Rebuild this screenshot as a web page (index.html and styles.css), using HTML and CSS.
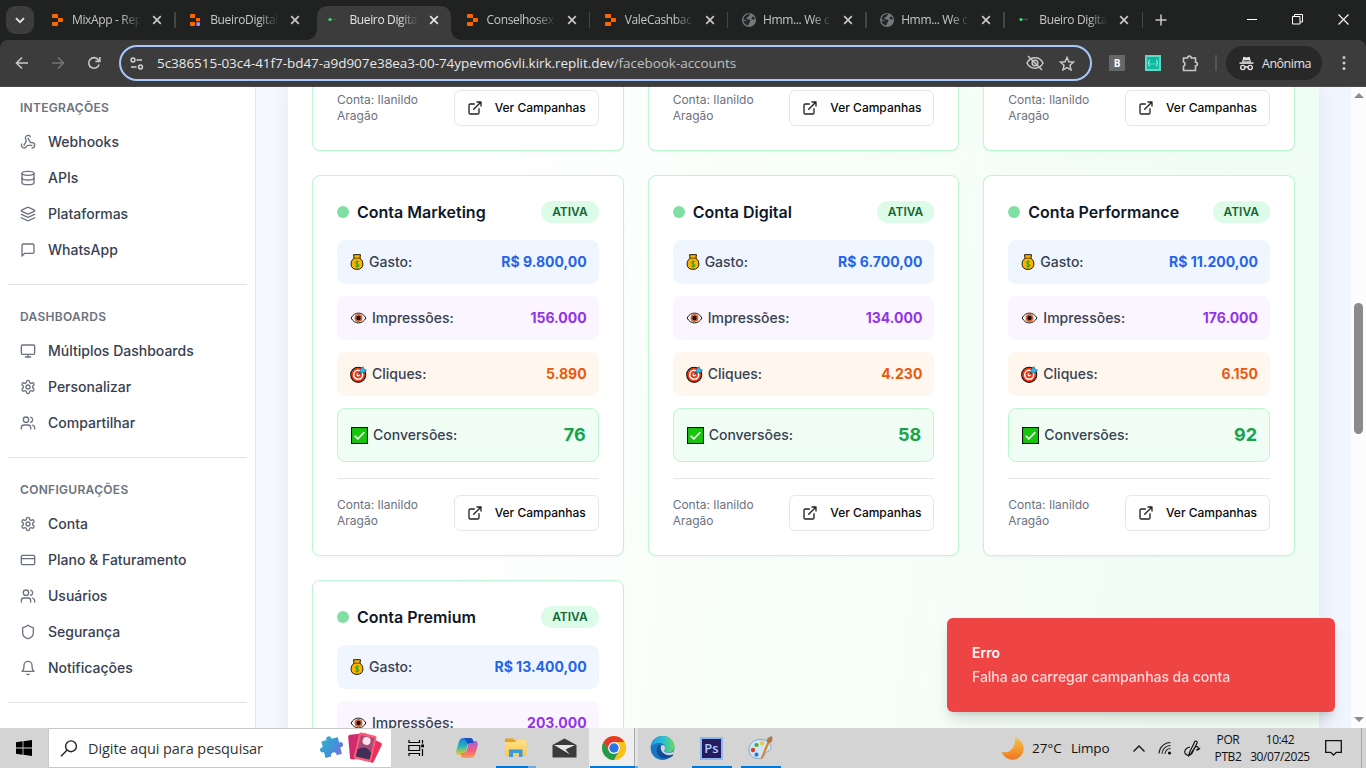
FILE: index.html
```html
<!DOCTYPE html>
<html lang="pt-BR">
<head>
<meta charset="utf-8">
<title>Bueiro Digital</title>
<link rel="stylesheet" href="styles.css">
</head>
<body>
<svg class="defs" width="0" height="0" aria-hidden="true">
  <defs>
    <linearGradient id="g-puz" x1="0" y1="0" x2="1" y2="1"><stop offset="0" stop-color="#35b6c8"/><stop offset=".55" stop-color="#3f94d6"/><stop offset="1" stop-color="#8a6ae0"/></linearGradient>
    <linearGradient id="g-moon" x1="0" y1="0" x2="0" y2="1"><stop offset="0" stop-color="#f6c544"/><stop offset="1" stop-color="#ef7420"/></linearGradient>
    <linearGradient id="g-edge" x1="0" y1="0" x2="1" y2="0"><stop offset="0" stop-color="#1d9fe3"/><stop offset=".55" stop-color="#2cc0cf"/><stop offset="1" stop-color="#67dc55"/></linearGradient>
    <linearGradient id="g-cop1" x1="0" y1="0" x2="0" y2="1"><stop offset="0" stop-color="#1b7be0"/><stop offset=".5" stop-color="#29b7b5"/><stop offset="1" stop-color="#f4cf1c"/></linearGradient>
    <linearGradient id="g-cop2" x1="0" y1="0" x2="0" y2="1"><stop offset="0" stop-color="#a75ce4"/><stop offset=".55" stop-color="#f0607d"/><stop offset="1" stop-color="#f9a050"/></linearGradient>
    <linearGradient id="g-fold" x1="0" y1="0" x2="0" y2="1"><stop offset="0" stop-color="#ffe08a"/><stop offset="1" stop-color="#fbc944"/></linearGradient>
  </defs>
  <symbol id="close" viewBox="0 0 10 10"><path d="M1.2 1.2l7.6 7.6M8.8 1.2l-7.6 7.6" fill="none" stroke="currentColor" stroke-width="1.7"/></symbol>
  <symbol id="replit" viewBox="0 0 12 12"><path fill="#ff6600" d="M1 0h4a1 1 0 0 1 1 1v3H1a1 1 0 0 1-1-1V1a1 1 0 0 1 1-1zM6 4h4a1 1 0 0 1 1 1v2a1 1 0 0 1-1 1H6zM1 8h5v3a1 1 0 0 1-1 1H1a1 1 0 0 1-1-1V9a1 1 0 0 1 1-1z"/></symbol>
  <symbol id="replit2" viewBox="0 0 12 12"><path fill="#ff6600" d="M1 0h4v4H1a1 1 0 0 1-1-1V1a1 1 0 0 1 1-1zM6 4h4v3.300H6zM1 8h4v4H1a1 1 0 0 1-1-1V9a1 1 0 0 1 1-1z"/><rect x="6.300" y="8.200" width="3.700" height="3.700" rx=".8" fill="#a78bfa"/></symbol>
  <symbol id="bueiro" viewBox="0 0 12 12"><circle cx="2" cy="5.500" r="1.600" fill="#37e47d"/><path d="M4 5.500h5" stroke="#26633f" stroke-width="1.200"/></symbol>
  <symbol id="globe" viewBox="0 0 14 14"><circle cx="7" cy="7" r="7" fill="#75797e"/><path fill="#242626" d="M8.200.8c-.2 1.700-1.300 1.500-1.700 2.600-.5 1.100-2.200.7-2 2 .2 1.200 1.700.8 3 1 1.400.3 1 1.900.2 2.700-.8.900-.5 2.700-1.800 3.300-2.400-.5-4.300-2.400-4.700-4.600 1.100-.1 2.600.7 3.700.5-.3-1-2.400-1.200-3.500-2.300C1.900 3.300 4.600.7 8.200.8zM13 6.300c-1.700.4-2.800.2-3.500-.6-.5-.7.3-1.500 1.600-2.300.9.7 1.600 1.800 1.900 2.900z"/></symbol>

  <symbol id="webhook" viewBox="0 0 24 24"><path d="M18 16.980h-5.990c-1.100 0-1.950.94-2.480 1.900A4 4 0 0 1 2 17c.01-.7.2-1.400.57-2"/><path d="m6 17 3.130-5.780c.53-.97.1-2.180-.5-3.100a4 4 0 1 1 6.890-4.060"/><path d="m12 6 3.130 5.730C15.660 12.700 16.900 13 18 13a4 4 0 0 1 0 8"/></symbol>
  <symbol id="database" viewBox="0 0 24 24"><ellipse cx="12" cy="5" rx="9" ry="3"/><path d="M3 5v14a9 3 0 0 0 18 0V5"/><path d="M3 12a9 3 0 0 0 18 0"/></symbol>
  <symbol id="layers" viewBox="0 0 24 24"><path d="m12.830 2.180a2 2 0 0 0-1.660 0L2.600 6.080a1 1 0 0 0 0 1.830l8.580 3.910a2 2 0 0 0 1.660 0l8.580-3.900a1 1 0 0 0 0-1.830Z"/><path d="m22 17.650-9.170 4.160a2 2 0 0 1-1.660 0L2 17.650"/><path d="m22 12.650-9.170 4.160a2 2 0 0 1-1.660 0L2 12.650"/></symbol>
  <symbol id="message" viewBox="0 0 24 24"><path d="M21 15a2 2 0 0 1-2 2H7l-4 4V5a2 2 0 0 1 2-2h14a2 2 0 0 1 2 2z"/></symbol>
  <symbol id="monitor" viewBox="0 0 24 24"><rect width="20" height="14" x="2" y="3" rx="2"/><path d="M8 21h8M12 17v4"/></symbol>
  <symbol id="settings" viewBox="0 0 24 24"><path d="M12.220 2h-.44a2 2 0 0 0-2 2v.18a2 2 0 0 1-1 1.730l-.43.25a2 2 0 0 1-2 0l-.15-.08a2 2 0 0 0-2.730.73l-.22.38a2 2 0 0 0 .73 2.730l.15.1a2 2 0 0 1 1 1.720v.51a2 2 0 0 1-1 1.740l-.15.09a2 2 0 0 0-.73 2.730l.22.38a2 2 0 0 0 2.730.73l.15-.08a2 2 0 0 1 2 0l.43.25a2 2 0 0 1 1 1.730V20a2 2 0 0 0 2 2h.44a2 2 0 0 0 2-2v-.18a2 2 0 0 1 1-1.730l.43-.25a2 2 0 0 1 2 0l.15.08a2 2 0 0 0 2.730-.73l.22-.39a2 2 0 0 0-.73-2.730l-.15-.08a2 2 0 0 1-1-1.740v-.5a2 2 0 0 1 1-1.740l.15-.09a2 2 0 0 0 .73-2.730l-.22-.38a2 2 0 0 0-2.730-.73l-.15.08a2 2 0 0 1-2 0l-.43-.25a2 2 0 0 1-1-1.730V4a2 2 0 0 0-2-2z"/><circle cx="12" cy="12" r="3"/></symbol>
  <symbol id="users" viewBox="0 0 24 24"><path d="M16 21v-2a4 4 0 0 0-4-4H6a4 4 0 0 0-4 4v2"/><circle cx="9" cy="7" r="4"/><path d="M22 21v-2a4 4 0 0 0-3-3.870M16 3.130a4 4 0 0 1 0 7.750"/></symbol>
  <symbol id="card" viewBox="0 0 24 24"><rect width="20" height="14" x="2" y="5" rx="2"/><path d="M2 10h20"/></symbol>
  <symbol id="shield" viewBox="0 0 24 24"><path d="M20 13c0 5-3.500 7.500-7.660 8.950a1 1 0 0 1-.67-.01C7.500 20.500 4 18 4 13V6a1 1 0 0 1 1-1c2 0 4.500-1.200 6.240-2.720a1.170 1.170 0 0 1 1.520 0C14.510 3.810 17 5 19 5a1 1 0 0 1 1 1z"/></symbol>
  <symbol id="bell" viewBox="0 0 24 24"><path d="M6 8a6 6 0 0 1 12 0c0 7 3 9 3 9H3s3-2 3-9"/><path d="M10.300 21a1.940 1.940 0 0 0 3.400 0"/></symbol>
  <symbol id="external" viewBox="0 0 24 24"><path d="M15 3h6v6M10 14 21 3M18 13v6a2 2 0 0 1-2 2H5a2 2 0 0 1-2-2V8a2 2 0 0 1 2-2h6"/></symbol>

  <symbol id="e-money" viewBox="0 0 13 16"><path d="M3 .7h7l-.6 3.500c1.900 1.300 3 3.400 3 6 0 3.300-2.200 5.200-5.900 5.200S.6 13.500.6 10.200c0-2.600 1.100-4.700 3-6z" fill="#fbb500" stroke="#231a05" stroke-width="1"/><path d="M3.300 4.200h6.400" stroke="#5b4305" stroke-width=".9"/><path d="M8.300 8.100c-.4-.6-1-.8-1.700-.8-1 0-1.700.5-1.700 1.300 0 1.900 3.500.8 3.500 2.800 0 .8-.8 1.300-1.800 1.300-.8 0-1.500-.3-1.900-.9M6.600 6.400v7.300" fill="none" stroke="#13a10e" stroke-width="1"/></symbol>
  <symbol id="e-eye" viewBox="0 0 16 12"><path d="M.6 6C2.300 2.800 5 1.100 8 1.100S13.700 2.800 15.400 6C13.700 9.200 11 10.900 8 10.900S2.300 9.200.6 6z" fill="#fff" stroke="#161616"/><circle cx="8" cy="6" r="4" fill="#d9602b"/><circle cx="8" cy="6" r="2.200" fill="#111"/></symbol>
  <symbol id="e-target" viewBox="0 0 16 16"><circle cx="7.700" cy="8.300" r="7.100" fill="#f03a17" stroke="#161616"/><circle cx="7.700" cy="8.300" r="4.200" fill="none" stroke="#fff" stroke-width="1.400"/><circle cx="7.700" cy="8.300" r="1.500" fill="#fff"/><path d="M7.600 8.400 12 4" stroke="#123d55" stroke-width="1"/><path d="M9.500 6.500V3.400L12.300.5l.8 2.300 2.500 1-2.800 2.700z" fill="#2db8f2" stroke="#134" stroke-width=".4"/></symbol>
  <symbol id="e-check" viewBox="0 0 16 16"><rect x=".5" y=".5" width="15" height="15" fill="#16c60c" stroke="#111" stroke-width="1"/><path d="m3.500 8.200 3 3 6-6.200" fill="none" stroke="#fff" stroke-width="1.500"/></symbol>
</svg>

<header class="tabstrip">
  <button class="tab-search"><svg width="10" height="7" viewBox="0 0 10 7"><path d="M1 1.200 5 5.200l4-4" fill="none" stroke="currentColor" stroke-width="1.900"/></svg></button>
  <div class="tabs">
    <div class="tab sep"><svg class="fav"><use href="#replit"/></svg><span class="tt">MixApp - Rep</span><svg class="x"><use href="#close"/></svg></div>
    <div class="tab"><svg class="fav"><use href="#replit2"/></svg><span class="tt">BueiroDigital</span><svg class="x"><use href="#close"/></svg></div>
    <div class="tab active"><svg class="fav"><use href="#bueiro"/></svg><span class="tt">Bueiro Digita</span><svg class="x"><use href="#close"/></svg></div>
    <div class="tab sep"><svg class="fav"><use href="#replit"/></svg><span class="tt">Conselhosex</span><svg class="x"><use href="#close"/></svg></div>
    <div class="tab sep"><svg class="fav"><use href="#replit"/></svg><span class="tt">ValeCashbac</span><svg class="x"><use href="#close"/></svg></div>
    <div class="tab sep"><svg class="fav globe"><use href="#globe"/></svg><span class="tt">Hmm... We c</span><svg class="x"><use href="#close"/></svg></div>
    <div class="tab sep"><svg class="fav globe"><use href="#globe"/></svg><span class="tt">Hmm... We c</span><svg class="x"><use href="#close"/></svg></div>
    <div class="tab sep"><svg class="fav"><use href="#bueiro"/></svg><span class="tt">Bueiro Digita</span><svg class="x"><use href="#close"/></svg></div>
  </div>
  <svg class="newtab" width="12" height="12" viewBox="0 0 12 12"><path d="M6 .5v11M.5 6h11" stroke="#c7c7c7" stroke-width="1.500"/></svg>
  <div class="winbtns">
    <svg width="10" height="11" viewBox="0 0 10 11"><path d="M0 5.500h10" stroke="#fff"/></svg>
    <svg width="11" height="11" viewBox="0 0 11 11"><path d="M.5 2.500h7.500v7.500H.5zM2.500 2.500V.5h8v7.500H8" fill="none" stroke="#fff"/></svg>
    <svg width="11" height="11" viewBox="0 0 11 11"><path d="M.5.5l10 10M10.500.5l-10 10" stroke="#fff" stroke-width="1.100"/></svg>
  </div>
</header>

<div class="toolbar">
  <nav class="navbtns">
    <svg width="14" height="14" viewBox="0 0 14 14"><path d="M13 7H2M7 1.500 1.500 7 7 12.500" fill="none" stroke="#c7c7c7" stroke-width="1.600"/></svg>
    <svg width="14" height="14" viewBox="0 0 14 14"><path d="M1 7h11M7 1.500 12.500 7 7 12.500" fill="none" stroke="#757575" stroke-width="1.600"/></svg>
    <svg width="14" height="14" viewBox="0 0 14 14"><path d="M12.100 8.500A5.300 5.300 0 1 1 11.300 3.800L12.600 5.200M12.800 1v4.400H8.400" fill="none" stroke="#c7c7c7" stroke-width="1.600"/></svg>
  </nav>
  <div class="omnibox">
    <svg width="14" height="13" viewBox="0 0 14 13"><g fill="none" stroke="#d2d2d2" stroke-width="1.500"><circle cx="3" cy="3" r="1.900"/><path d="M6.500 3H12M1 10h5.500"/><circle cx="10.500" cy="10" r="1.900"/></g></svg>
    <span class="url">5c386515-03c4-41f7-bd47-a9d907e38ea3-00-74ypevmo6vli.kirk.replit.dev<i>/facebook-accounts</i></span>
    <svg class="eye" width="18" height="16" viewBox="0 0 18 16"><g fill="none" stroke="#c7c7c7" stroke-width="1.500"><path d="M1 8c1.600-3.400 4.500-5.200 8-5.200s6.400 1.800 8 5.200c-1.600 3.400-4.500 5.200-8 5.200S2.600 11.400 1 8z"/><circle cx="9" cy="8" r="2.800"/><path d="m2 1 14 14"/></g></svg>
    <svg class="star" width="16" height="15" viewBox="0 0 16 15"><path d="m8 1.500 1.900 4.300 4.600.4-3.500 3.100 1 4.600L8 11.500l-4 2.400 1-4.600-3.500-3.100 4.600-.4z" fill="none" stroke="#c7c7c7" stroke-width="1.500"/></svg>
  </div>
  <div class="exts">
    <b class="ext-b">B</b>
    <svg width="16" height="16" viewBox="0 0 16 16"><rect width="16" height="16" fill="#5ed7c5"/><rect x="2" y="2" width="12" height="12" fill="#10b8a3"/><path d="M5 5q-1.500 0-1 1.600T3 8q1.500 0 1 1.500T5 11M11 5q1.500 0 1 1.600T13 8q-1.500 0-1 1.500T11 11M5.700 9h1M7.500 9h1M9.300 9h1" fill="none" stroke="#b6fff0" stroke-width=".9"/></svg>
    <svg width="17" height="17" viewBox="0 0 17 17"><path d="M1.500 3h4a1.900 1.900 0 0 1 3.800 0h4.200v4.200a1.900 1.900 0 0 1 0 3.800v4.500h-12v-4.200a2.300 2.300 0 0 0 0-4.300z" fill="none" stroke="#c7c7c7" stroke-width="1.600"/></svg>
  </div>
  <div class="anon"><svg width="15" height="15" viewBox="0 0 15 15"><path d="M3 6.500 4.300.8l3.200.8 3.200-.8L12 6.500z" fill="#e3e3e3"/><path d="M4.500 4.800h6" stroke="#282828" stroke-width="1.100"/><path d="M.5 7.100h14" stroke="#e3e3e3" stroke-width="1.500"/><g fill="none" stroke="#e3e3e3" stroke-width="1.400"><circle cx="3.800" cy="11.500" r="2.100"/><circle cx="11.200" cy="11.500" r="2.100"/><path d="M6 11.300q1.500-1 3 0"/></g></svg>Anônima</div>
  <svg class="dots" width="4" height="16" viewBox="0 0 4 16"><g fill="#c7c7c7"><circle cx="2" cy="2.500" r="1.500"/><circle cx="2" cy="8" r="1.500"/><circle cx="2" cy="13.500" r="1.500"/></g></svg>
</div>

<div class="page">
  <aside class="sidebar">
    <section><h2>INTEGRAÇÕES</h2>
      <a><svg><use href="#webhook"/></svg>Webhooks</a>
      <a><svg><use href="#database"/></svg>APIs</a>
      <a><svg><use href="#layers"/></svg>Plataformas</a>
      <a><svg><use href="#message"/></svg>WhatsApp</a></section>
    <section><h2>DASHBOARDS</h2>
      <a><svg><use href="#monitor"/></svg>Múltiplos Dashboards</a>
      <a><svg><use href="#settings"/></svg>Personalizar</a>
      <a><svg><use href="#users"/></svg>Compartilhar</a></section>
    <section><h2>CONFIGURAÇÕES</h2>
      <a><svg><use href="#settings"/></svg>Conta</a>
      <a><svg><use href="#card"/></svg>Plano &amp; Faturamento</a>
      <a><svg><use href="#users"/></svg>Usuários</a>
      <a><svg><use href="#shield"/></svg>Segurança</a>
      <a><svg><use href="#bell"/></svg>Notificações</a></section>
  </aside>
  <main class="main">
    <div class="panel">
      <article class="acc tail"><footer><p>Conta: Ilanildo Aragão</p><button><svg><use href="#external"/></svg>Ver Campanhas</button></footer></article>
      <article class="acc tail"><footer><p>Conta: Ilanildo Aragão</p><button><svg><use href="#external"/></svg>Ver Campanhas</button></footer></article>
      <article class="acc tail"><footer><p>Conta: Ilanildo Aragão</p><button><svg><use href="#external"/></svg>Ver Campanhas</button></footer></article>

      <article class="acc">
        <header><h3>Conta Marketing</h3><span class="badge">ATIVA</span></header>
        <div class="row blue"><span><svg class="m"><use href="#e-money"/></svg>Gasto:</span><b>R$ 9.800,00</b></div>
        <div class="row purple"><span><svg class="e"><use href="#e-eye"/></svg>Impressões:</span><b>156.000</b></div>
        <div class="row orange"><span><svg class="t"><use href="#e-target"/></svg>Cliques:</span><b>5.890</b></div>
        <div class="row green"><span><svg class="t"><use href="#e-check"/></svg>Conversões:</span><b>76</b></div>
        <footer><p>Conta: Ilanildo Aragão</p><button><svg><use href="#external"/></svg>Ver Campanhas</button></footer>
      </article>
      <article class="acc">
        <header><h3>Conta Digital</h3><span class="badge">ATIVA</span></header>
        <div class="row blue"><span><svg class="m"><use href="#e-money"/></svg>Gasto:</span><b>R$ 6.700,00</b></div>
        <div class="row purple"><span><svg class="e"><use href="#e-eye"/></svg>Impressões:</span><b>134.000</b></div>
        <div class="row orange"><span><svg class="t"><use href="#e-target"/></svg>Cliques:</span><b>4.230</b></div>
        <div class="row green"><span><svg class="t"><use href="#e-check"/></svg>Conversões:</span><b>58</b></div>
        <footer><p>Conta: Ilanildo Aragão</p><button><svg><use href="#external"/></svg>Ver Campanhas</button></footer>
      </article>
      <article class="acc">
        <header><h3>Conta Performance</h3><span class="badge">ATIVA</span></header>
        <div class="row blue"><span><svg class="m"><use href="#e-money"/></svg>Gasto:</span><b>R$ 11.200,00</b></div>
        <div class="row purple"><span><svg class="e"><use href="#e-eye"/></svg>Impressões:</span><b>176.000</b></div>
        <div class="row orange"><span><svg class="t"><use href="#e-target"/></svg>Cliques:</span><b>6.150</b></div>
        <div class="row green"><span><svg class="t"><use href="#e-check"/></svg>Conversões:</span><b>92</b></div>
        <footer><p>Conta: Ilanildo Aragão</p><button><svg><use href="#external"/></svg>Ver Campanhas</button></footer>
      </article>
      <article class="acc">
        <header><h3>Conta Premium</h3><span class="badge">ATIVA</span></header>
        <div class="row blue"><span><svg class="m"><use href="#e-money"/></svg>Gasto:</span><b>R$ 13.400,00</b></div>
        <div class="row purple"><span><svg class="e"><use href="#e-eye"/></svg>Impressões:</span><b>203.000</b></div>
      </article>
    </div>
  </main>
  <div class="scrollbar"><i class="up"></i><i class="thumb"></i><i class="down"></i></div>
  <div class="toast"><strong>Erro</strong><span>Falha ao carregar campanhas da conta</span></div>
</div>

<footer class="taskbar">
  <div class="start"><svg width="16" height="16" viewBox="0 0 16 16"><path d="M0 2.200 6.600 1.300v6.300H0zM7.400 1.200 16 0v7.600H7.400zM0 8.400h6.600v6.300L0 13.800zM7.400 8.400H16V16l-8.600-1.200z" fill="#000"/></svg></div>
  <div class="search">
    <svg width="18" height="17" viewBox="0 0 18 17"><circle cx="11" cy="6.300" r="5.400" fill="none" stroke="#222" stroke-width="1.400"/><path d="M7.200 10.100 1 16.200" stroke="#222" stroke-width="1.400"/></svg>
    <span>Digite aqui para pesquisar</span>
    <svg class="promo" width="65" height="34" viewBox="0 0 65 34"><path transform="rotate(-14 13 16)" d="M4 8h5.500c-1.500-4 5.500-5 5 0H21v5.500c4-1.500 5 5.500 0 5V25h-5.500c1.500-4.500-6-5-5.500 0H4v-6c-4.500 1-4.500-6 0-5z" fill="url(#g-puz)"/><rect x="30" y="3" width="19" height="25" rx="2" transform="rotate(-5 39 15)" fill="#ce2c6c"/><rect x="45" y="8" width="15" height="22" rx="2" transform="rotate(26 52 18)" fill="#ec3059"/><g transform="rotate(13 47 17)"><rect x="37" y="3" width="18" height="27" rx="2" fill="#ff5b79"/><rect x="39" y="5.500" width="14" height="22" fill="#a64c78"/><circle cx="46" cy="10" r="4" fill="#ffe3e8"/><path d="M39 27.500v-7q7-7 14 0v7z" fill="#432e58"/></g></svg>
  </div>
  <div class="tview"><svg width="17" height="16" viewBox="0 0 17 16"><path d="M1 0v2.500h10.500V0M1 16v-2.500h10.500V16M.8 5.500h10.900v5H.8zM14.500 0v3.500M14.500 9v7" fill="none" stroke="#000" stroke-width="1.200"/><rect x="13.200" y="4.500" width="2.800" height="2.800"/></svg></div>
  <div class="apps">
    <div><svg width="24" height="24" viewBox="0 0 24 24"><path d="M9 2h6c2 0 2.500 1 3 2.500l.7 2.500h-3c-2 0-3 1-3.500 3l-1.500 6c-.6 2-1.500 3-3.500 3H4C1.500 19 .7 17 1.400 14L4 5.500C4.800 3 6.500 2 9 2z" fill="url(#g-cop1)"/><path d="M15 22H9c-2 0-2.500-1-3-2.500L5.300 17h3c2 0 3-1 3.500-3l1.500-6c.6-2 1.500-3 3.500-3H20c2.500 0 3.300 2 2.600 5L20 18.500c-.8 2.500-2.500 3.500-5 3.500z" fill="url(#g-cop2)"/><path d="M9 2h6c2 0 2.500 1 3 2.500l.7 2.500h-3c-1.200 0-2 .4-2.600 1.200z" fill="#1752c2"/></svg></div>
    <div class="run wide"><svg width="24" height="22" viewBox="0 0 24 22"><path d="M1 1.500h8l2 2h10.500V19H1z" fill="#e5a61b"/><path d="M1 5h10l2-2h9.500v16H1z" fill="url(#g-fold)"/><path d="M5 20v-7.500h13.500V20H15v-4H9v4z" fill="#3b9ad8"/></svg></div>
    <div><svg width="25" height="20" viewBox="0 0 25 20"><path d="M.5 7 12.500.5l12 6.500v12.500H.5z" fill="#3a3a3a"/><path d="M2 7h21l-9.500 4.500L18 16.500 10.500 12z" fill="#e6e6e6"/></svg></div>
    <div class="run cur"><svg width="24" height="24" viewBox="0 0 24 24"><circle cx="12" cy="12" r="12" fill="#fbc116"/><path d="M12 6h10.390A12 12 0 0 0 1.610 6L6.800 15z" fill="#e33b2e"/><path d="M1.610 6A12 12 0 0 0 12 24l5.200-9L12 12 6.800 15z" fill="#229a4c"/><path d="M22.390 6A12 12 0 0 1 12 24l5.200-9A6 6 0 0 0 17 8.500L12 6z" fill="#fbc116"/><circle cx="12" cy="12" r="5.900" fill="#fff"/><circle cx="12" cy="12" r="4.700" fill="#2b73e8"/></svg></div>
    <div><svg width="25" height="24" viewBox="0 0 25 24"><circle cx="12.500" cy="12" r="11.900" fill="#1976c4"/><path d="M.8 10.500C2 4 7 0 12.700 0 19.500 0 24.500 5 24.500 10.500c0 4-3 6-6.300 6-2.200 0-4.200-.7-4.200-1.700 0-.7 1.200-1.200 1.200-3.300 0-2.500-2.500-4.500-6-4.500-4 0-7 2-8.400 3.500z" fill="url(#g-edge)"/><path d="M9 9c-3 3-3 7.500 0 11 3 3.300 8 3.500 13 .5 1-.7 1.500-1.500.7-2.100C18 20.500 14 18.500 12.500 15.500c-.8-2-.3-3.500.8-5z" fill="#124e96"/><path d="M24.300 15c-3.500 2.500-8 2.200-10.200.5-.5-.8.900-1.500 1-3.500 0-1.500-1-3-2.500-2.900-2.500.2-2.700 4.600.3 7.600 3 2.800 7 3 9.800 1.600z" fill="#d4d4d4"/></svg></div>
    <div class="run mid"><span class="ps">Ps</span></div>
    <div class="run mid"><svg width="25" height="24" viewBox="0 0 25 24"><path d="M1 15C0 8.500 5.500 3.500 12 3.500s11 3 11 8c0 4-3.500 3.500-5 5S17 22 10.500 22.500C5.500 23 1.700 19.500 1 15z" fill="#cfe6f4" stroke="#7fa9c6"/><circle cx="5" cy="14" r="2.200" fill="#d8402e"/><circle cx="8.500" cy="9" r="2.100" fill="#47a83f"/><circle cx="14" cy="7.300" r="2.100" fill="#f2c632"/><circle cx="8.500" cy="18.700" r="2.100" fill="#3474cc"/><path d="m12.500 22.500 7-17 2.300.8-7.300 16.500z" fill="#e2832b"/><path d="M18.800 5.500c-.3-3 1.700-4.500 5.200-5.300 1 3.500 0 6.500-2.500 6.800z" fill="#a97a48"/></svg></div>
  </div>
  <div class="tray">
    <svg class="moon" width="23" height="23" viewBox="0 0 23 23"><path d="M14 .5A11.300 11.300 0 1 1 .5 14.500C8 18 15.500 10 14 .5z" fill="url(#g-moon)"/></svg>
    <span class="deg">27°C</span><span class="sky">Limpo</span>
    <svg class="chev" width="12" height="7" viewBox="0 0 12 7"><path d="M.5 6.500 6 1l5.500 5.500" fill="none" stroke="#111" stroke-width="1.400"/></svg>
    <svg class="wifi" width="14" height="14" viewBox="0 0 14 14"><g fill="none" stroke="#222" stroke-width="1.100"><path d="M1 12.500A11.500 11.500 0 0 1 12.500 1.500M4 12.800a8.500 8.500 0 0 1 8.500-8.300M7 13a5.500 5.500 0 0 1 5.500-5.500"/></g><circle cx="11.500" cy="12" r="1.500"/></svg>
    <svg class="pen" width="17" height="17" viewBox="0 0 17 17"><path d="M5.500 12.500 10.700 1.700c.7-1.200 3-.2 2.400 1.200L7.800 13.500l-3 2.200zM6 7C2.500 7.500 0 10 1 13c1 2.500 4 3 6 .5 2.500-3.500 3-6.500 5.500-7 2.500-.3 2 3-.2 3.500 2 .3 3-.5 3.700-2" fill="none" stroke="#111" stroke-width="1.200"/></svg>
    <div class="two lang"><span>POR</span><span>PTB2</span></div>
    <div class="two clock"><span>10:42</span><span>30/07/2025</span></div>
    <svg class="note" width="17" height="16" viewBox="0 0 17 16"><path d="M.7.700h15.600v11.600h-5L8.500 15l-2.800-2.700h-5z" fill="none" stroke="#111" stroke-width="1.300"/></svg>
    <i class="peek"></i>
  </div>
</footer>
</body>
</html>
```
FILE: styles.css
```css
* { box-sizing: border-box; }
body { margin: 0; width: 1366px; height: 768px; overflow: hidden; display: flex; flex-direction: column; font-family: Inter, sans-serif; background: #202222; }
.defs { position: absolute; }
svg { flex: none; display: block; }
h2, h3, p { margin: 0; }
button { font: inherit; padding: 0; }

.tabstrip { height: 40px; flex: none; display: flex; background: #202222; color: #c7c7c7; font: 12px "Open Sans", sans-serif; }
.tab-search { width: 28px; height: 28px; margin: 6px 3.500px 0 6px; border: 0; border-radius: 9px; background: #3c3c3c; color: #e3e3e3; display: grid; place-items: center; }
.tabs { display: flex; }
.tab { width: 138.200px; height: 40px; display: flex; align-items: center; padding-left: 14.500px; position: relative; }
.tab .fav { width: 12px; height: 12px; margin-right: 8px; }
.tab .fav.globe { width: 14px; height: 14px; margin: 0 7px 0 -1px; }
.tab .tt { width: 72px; flex: none; white-space: nowrap; letter-spacing: -.35px; margin-right: 8px; height: 20px; line-height: 20px; -webkit-mask-image: linear-gradient(90deg, #000 68%, transparent 96%); mask-image: linear-gradient(90deg, #000 68%, transparent 96%); }
.tab .x { width: 10px; height: 10px; }
.tab.active .tt { margin-left: 1px; margin-right: 8px; }
.tab.sep::after { content: ""; position: absolute; right: 0; top: 12px; width: 1.500px; height: 16px; background: #444746; }
.tab.active { color: #e3e3e3; z-index: 0; }
.tab.active::before { content: ""; position: absolute; z-index: -1; left: 3px; right: 1px; top: 6px; bottom: 0; background: #3c3c3c; border-radius: 10px 10px 0 0; }
.tab.active::after { content: ""; position: absolute; z-index: -1; left: -7px; right: -9px; bottom: 0; height: 10px; background: radial-gradient(circle at 0 0, transparent 9.500px, #3c3c3c 10px) left/10px 10px no-repeat, radial-gradient(circle at 100% 0, transparent 9.500px, #3c3c3c 10px) right/10px 10px no-repeat; }
.newtab { margin: 14px 0 0 12px; }
.winbtns { margin-left: auto; display: flex; }
.winbtns svg { margin: 14px 17.500px 0; }

.toolbar { height: 47px; flex: none; display: flex; align-items: center; background: #3c3c3c; border-radius: 8px 8px 0 0; border-bottom: 1px solid #4a4a4a; font-family: "Open Sans", sans-serif; }
.navbtns { display: flex; gap: 22px; padding: 0 18px 0 15px; }
.omnibox { width: 973px; height: 36px; border: 2px solid #a8c7fa; border-radius: 18px; display: flex; align-items: center; padding: 0 15px 0 9px; }
.url { font-size: 13.500px; letter-spacing: -.045px; color: #e8e8e8; margin-left: 13px; white-space: nowrap; }
.url i { font-style: normal; color: #c0c0c0; }
.omnibox .eye { margin-left: auto; }
.omnibox .star { margin-left: 15px; }
.exts { display: flex; align-items: center; gap: 20px; margin-left: 17px; padding-right: 17px; }
.exts svg:last-child { margin-left: 1px; margin-right: -1px; }
.ext-b { width: 16px; height: 16px; background: #676767; color: #fff; border-radius: 1px; font: bold 10px/16px "Open Sans", sans-serif; text-align: center; }
.exts + .anon::before { content: ""; position: absolute; left: -11px; top: 9px; height: 16px; width: 2px; background: #555; }
.anon { position: relative; margin-left: 11px; width: 96px; height: 34px; border-radius: 17px; background: #282828; color: #e3e3e3; font-size: 12.500px; letter-spacing: -.6px; letter-spacing: -.5px; display: flex; align-items: center; padding-left: 13px; gap: 8px; }
.dots { margin-left: 20px; }

.page { flex: 1; min-height: 0; display: flex; position: relative; background: #fff; overflow: hidden; }
.sidebar { width: 256px; flex: none; background: #fff; border-right: 1px solid #e5e7eb; padding: 0 8px; }
.sidebar section { border-bottom: 1px solid #e1e2e5; padding: 24px 0 16px; }
.sidebar section:first-child { padding-top: 13px; }
.sidebar h2 { font-size: 12px; line-height: 16px; font-weight: 600; letter-spacing: .3px; color: #6b7280; padding: 0 12px; margin-bottom: 8px; }
.sidebar a { display: flex; align-items: center; height: 36px; padding: 0 12px; gap: 12px; font-size: 14px; line-height: 20px; font-weight: 500; color: #374151; }
.sidebar svg { width: 16px; height: 16px; fill: none; stroke: #6b7280; stroke-width: 2; stroke-linecap: round; stroke-linejoin: round; }

.main { flex: 1; min-width: 0; padding: 0 32px; background: linear-gradient(90deg, #f5f8fc, #f0f5fe); overflow: hidden; }
.panel { height: 1100px; padding: 0 24px; display: grid; grid-template-columns: repeat(3, 1fr); gap: 24px; align-content: start; background: linear-gradient(97deg, #fff 14%, #f0fdf4 82%); box-shadow: 0 0 18px rgba(15, 23, 42, .07); }
.acc { background: #fff; border: 1px solid #bbf7d0; border-radius: 8px; padding: 24px; display: flex; flex-direction: column; gap: 12px; box-shadow: 0 1px 2px rgba(0, 0, 0, .05); }
.acc.tail { border-top: 0; border-radius: 0 0 8px 8px; padding-top: 3px; }
.acc header { height: 24px; margin-bottom: 4px; display: flex; align-items: center; justify-content: space-between; }
.acc h3 { font-size: 16px; line-height: 24px; font-weight: 600; color: #0f172a; display: flex; align-items: center; gap: 8px; }
.acc h3::before { content: ""; width: 12px; height: 12px; border-radius: 50%; background: #80dfa3; }
.badge { height: 22px; line-height: 22px; padding: 0 11px; border-radius: 11px; background: #dcfce7; color: #166534; font-size: 12px; font-weight: 600; }
.row { height: 44px; border-radius: 8px; padding: 0 12px; display: flex; align-items: center; justify-content: space-between; font-size: 14px; line-height: 20px; }
.row span { display: flex; align-items: center; color: #374151; font-weight: 500; }
.row b { font-weight: 700; }
.row svg.m { width: 14px; height: 16px; margin: 0 5px 0 1px; }
.row svg.e { width: 17px; height: 12px; margin: 0 5px 0 1px; }
.row svg.t { width: 17px; height: 17px; margin: 0 5px 0 1px; }
.blue { background: #eff6ff; } .blue b { color: #2563eb; }
.purple { background: #faf5ff; } .purple b { color: #9333ea; }
.orange { background: #fff7ed; } .orange b { color: #ea580c; }
.green { height: 54px; background: #f0fdf4; border: 1px solid #bbf7d0; } .green b { color: #16a34a; font-size: 18px; line-height: 28px; }
.acc footer { border-top: 1px solid #e5e7eb; margin-top: 4px; padding-top: 16px; display: flex; align-items: center; justify-content: space-between; }
.acc.tail footer { border: 0; padding: 0; margin: 0; }
.acc footer p { width: 90px; font-size: 12px; line-height: 16px; color: #6b7280; }
.acc footer button { height: 36px; width: 145px; border: 1px solid #e5e7eb; border-radius: 6px; background: #fff; display: flex; align-items: center; padding-left: 12px; font-size: 12px; line-height: 16px; font-weight: 500; color: #09090b; white-space: nowrap; }
.acc footer button svg { width: 16px; height: 16px; margin-right: 12px; fill: none; stroke: #222; stroke-width: 2; stroke-linecap: round; stroke-linejoin: round; }
.scrollbar { width: 15px; background: #fcfcfc; display: flex; flex-direction: column; align-items: center; padding: 6px 0; }
.scrollbar .up, .scrollbar .down { border: 5px solid transparent; width: 0; height: 0; }
.scrollbar .up { border-bottom: 5px solid #8b8b8b; border-top: 0; }
.scrollbar .down { border-top: 5px solid #8b8b8b; border-bottom: 0; margin-top: auto; }
.scrollbar .thumb { width: 9px; height: 131px; border-radius: 5px; background: #8b8b8b; margin-top: 205px; }
.toast { position: absolute; left: 947px; top: 531px; width: 388px; height: 94px; border-radius: 6px; background: #ef4444; padding: 25px; color: #fafafa; font-size: 14px; line-height: 20px; display: flex; flex-direction: column; gap: 4px; box-shadow: 0 10px 15px -3px rgba(0, 0, 0, .14), 0 4px 6px -4px rgba(0, 0, 0, .14); }
.toast strong { font-weight: 600; }
.toast span { opacity: .82; font-weight: 500; letter-spacing: -.05px; }

.taskbar { height: 40px; flex: none; background: #d4d4d4; display: flex; font: 12px "Open Sans", sans-serif; color: #111; }
.start { width: 48px; display: grid; place-items: center; }
.search { width: 343px; background: #fff; border: 1px solid #c8c8c8; border-right: 0; display: flex; align-items: center; padding-left: 11px; }
.search span { font-size: 14.500px; letter-spacing: -.08px; margin-left: 10px; width: 180px; white-space: nowrap; color: #333; }
.promo { margin-left: 51px; }
.tview { width: 51px; display: grid; place-items: center; }
.apps { display: flex; }
.apps > div { width: 49px; display: grid; place-items: center; position: relative; }
.apps .run::after { content: ""; position: absolute; bottom: 0; left: 5px; width: 40px; height: 2px; background: #0078d7; }
.apps .wide::after { background: linear-gradient(90deg, #0078d7 80%, #6aabe0 80%); left: 5px; }
.apps .cur { background: linear-gradient(90deg, #eee 45px, #aaa 45px, #aaa 46px, #e2e2e2 46px); }
.apps .cur::after { width: 48px; left: 1px; background: linear-gradient(90deg, #0078d7 45px, #6aabe0 45px); }
.ps { width: 23px; height: 23px; background: #261b5e; border: 2px solid #8db9ef; color: #a9d2ff; font: 600 13px/18px "Open Sans", sans-serif; text-align: center; }
.tray { margin-left: auto; display: flex; align-items: center; }
.deg { font-size: 13.500px; margin-left: 8px; width: 39px; }
.sky { font-size: 13.500px; letter-spacing: -.2px; width: 62px; }
.wifi { margin-left: 13px; }
.pen { margin-left: 12px; }
.two { display: flex; flex-direction: column; align-items: center; line-height: 17px; font-size: 12px; letter-spacing: -.4px; white-space: nowrap; }
.lang { width: 36px; margin-left: 9px; }
.clock { width: 62px; margin-left: 3px; }
.note { margin-left: 14px; }
.peek { width: 1px; height: 40px; background: #aaa; margin: 0 4px 0 19px; }
```
